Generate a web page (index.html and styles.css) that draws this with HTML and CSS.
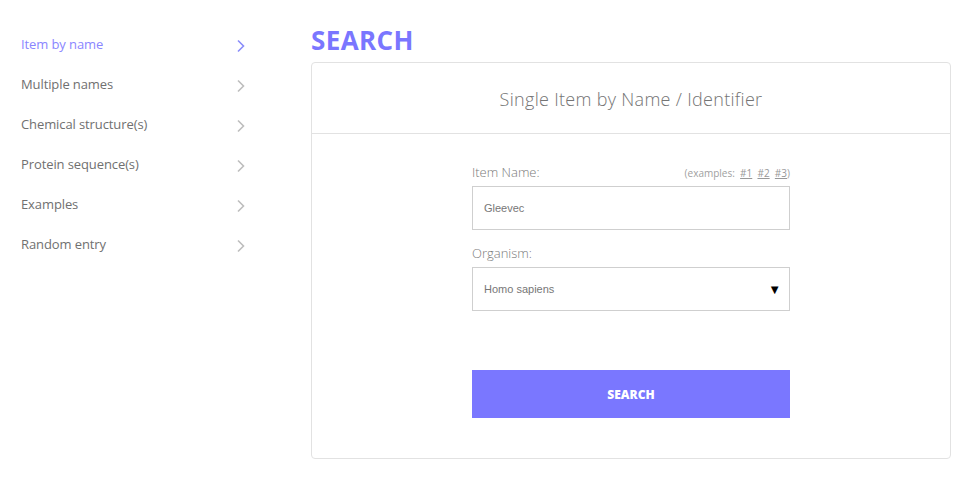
FILE: index.html
```html
<!DOCTYPE html>
<html>
<head>
<meta charset="utf-8">
<link rel="stylesheet" href="styles.css">
</head>
<body>
<div class="page">
  <nav class="side">
    <a class="side-item active">Item by name<span class="chev"><svg width="10" height="14" viewBox="0 0 10 14"><path d="M2 1.5 L7.5 7 L2 12.5" fill="none" stroke="currentColor" stroke-width="1.6"/></svg></span></a>
    <a class="side-item">Multiple names<span class="chev"><svg width="10" height="14" viewBox="0 0 10 14"><path d="M2 1.5 L7.5 7 L2 12.5" fill="none" stroke="currentColor" stroke-width="1.6"/></svg></span></a>
    <a class="side-item">Chemical structure(s)<span class="chev"><svg width="10" height="14" viewBox="0 0 10 14"><path d="M2 1.5 L7.5 7 L2 12.5" fill="none" stroke="currentColor" stroke-width="1.6"/></svg></span></a>
    <a class="side-item">Protein sequence(s)<span class="chev"><svg width="10" height="14" viewBox="0 0 10 14"><path d="M2 1.5 L7.5 7 L2 12.5" fill="none" stroke="currentColor" stroke-width="1.6"/></svg></span></a>
    <a class="side-item">Examples<span class="chev"><svg width="10" height="14" viewBox="0 0 10 14"><path d="M2 1.5 L7.5 7 L2 12.5" fill="none" stroke="currentColor" stroke-width="1.6"/></svg></span></a>
    <a class="side-item">Random entry<span class="chev"><svg width="10" height="14" viewBox="0 0 10 14"><path d="M2 1.5 L7.5 7 L2 12.5" fill="none" stroke="currentColor" stroke-width="1.6"/></svg></span></a>
  </nav>
  <main class="main">
    <h1 class="title">SEARCH</h1>
    <section class="card">
      <div class="card-head">Single Item by Name / Identifier</div>
      <div class="card-body">
        <form class="form">
          <div class="label-row">
            <label class="label">Item Name:</label>
            <span class="examples">(examples:&nbsp; <a>#1</a>&nbsp; <a>#2</a>&nbsp; <a>#3</a>)</span>
          </div>
          <div class="field">Gleevec</div>
          <div class="label-row">
            <label class="label">Organism:</label>
          </div>
          <div class="field select">Homo sapiens<span class="arrow">▼</span></div>
          <button type="button" class="btn">SEARCH</button>
        </form>
      </div>
    </section>
  </main>
</div>
</body>
</html>
```
FILE: styles.css
```css
* { box-sizing: border-box; }
html, body { margin: 0; padding: 0; background: #fff; }
body { font-family: "Open Sans", "Liberation Sans", sans-serif; color: #6f6f6f; }
.page { display: flex; }
.side {
  width: 311px;
  padding: 24px 0 0 21px;
  display: flex;
  flex-direction: column;
}
.side-item {
  display: flex;
  justify-content: space-between;
  align-items: center;
  width: 224px;
  height: 40px;
  font-size: 13px;
  color: #707070;
  letter-spacing: -0.1px;
}
.side-item .chev { color: #bdbdbd; display: flex; padding-top: 3px; margin-right: -1px; }
.side-item.active { color: #8a86ff; }
.side-item.active .chev { color: #8a8dfa; }
.main { width: 640px; padding-top: 26px; }
.title {
  margin: 0 0 8px;
  font-size: 26px;
  line-height: 28px;
  font-weight: 700;
  color: #7a76ff;
  letter-spacing: 0.4px;
}
.card {
  border: 1px solid #e2e2e2;
  border-radius: 4px;
  height: 397px;
}
.card-head {
  height: 71px;
  border-bottom: 1px solid #e2e2e2;
  display: flex;
  align-items: center;
  justify-content: center;
  font-size: 18px;
  letter-spacing: 0.3px;
  color: #747474;
  padding-top: 2px;
  font-weight: 300;
}
.card-body { display: flex; justify-content: center; padding-top: 27px; }
.form { width: 318px; display: flex; flex-direction: column; }
.label-row {
  display: flex;
  justify-content: space-between;
  align-items: baseline;
  height: 25px;
  padding-top: 2px;
}
.label { font-size: 13px; color: #7a7a7a; font-weight: 300; }
.examples { font-size: 10px; color: #a0a0a0; }
.examples a { text-decoration: underline; color: #999; }
.field {
  height: 44px;
  border: 1px solid #cfcfcf;
  font-family: "Liberation Sans", Arial, sans-serif;
  font-size: 11px;
  font-weight: normal;
  color: #777;
  padding-left: 11px;
  display: flex;
  align-items: center;
  margin-bottom: 12px;
}
.select { justify-content: space-between; padding-right: 8px; }
.arrow { color: #000; font-size: 13px; }
.btn {
  margin-top: 47px;
  height: 48px;
  border: 0;
  background: #7a77ff;
  color: #fff;
  font-family: "Open Sans", sans-serif;
  font-weight: 800;
  font-size: 12px;
}
```
